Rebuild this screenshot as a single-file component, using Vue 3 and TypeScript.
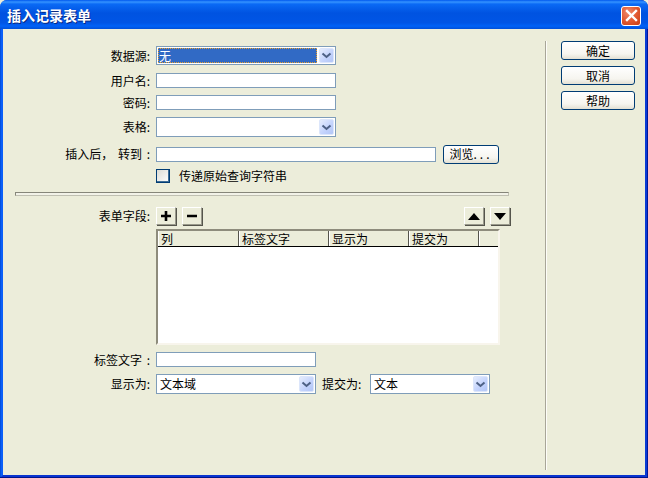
<script setup lang="ts">
const columns: { label: string; width: number; pad: number }[] = [
  { label: '列', width: 81, pad: 2 },
  { label: '标签文字', width: 90, pad: 2 },
  { label: '显示为', width: 80, pad: 2 },
  { label: '提交为', width: 70, pad: 2 },
]
</script>

<template>
  <div class="window">
    <header class="titlebar">
      <span class="title">插入记录表单</span>
      <button class="close" aria-label="关闭">
        <svg width="13" height="13" viewBox="0 0 13 13">
          <path d="M2 2 L11 11 M11 2 L2 11" stroke="#fff" stroke-width="2.4" stroke-linecap="square" fill="none" />
        </svg>
      </button>
    </header>
    <div class="body">
      <main class="form">
        <div class="row r-source">
          <label class="lab">数据源:</label>
          <div class="select w180">
            <span class="value selected">无</span>
            <span class="arrow"><svg width="11" height="7" viewBox="0 0 11 7"><path d="M1.5 1.5 L5.5 5 L9.5 1.5" fill="none" stroke="#4d6185" stroke-width="2" /></svg></span>
          </div>
        </div>
        <div class="row r-user">
          <label class="lab">用户名:</label>
          <div class="input w180"></div>
        </div>
        <div class="row r-pass">
          <label class="lab">密码:</label>
          <div class="input w180"></div>
        </div>
        <div class="row r-table">
          <label class="lab">表格:</label>
          <div class="select w180 tall">
            <span class="value"></span>
            <span class="arrow"><svg width="11" height="7" viewBox="0 0 11 7"><path d="M1.5 1.5 L5.5 5 L9.5 1.5" fill="none" stroke="#4d6185" stroke-width="2" /></svg></span>
          </div>
        </div>
        <div class="row r-goto">
          <label class="lab">插入后， 转到 :</label>
          <div class="input w280"></div>
          <button class="xp browse">浏览<span class="dots">...</span></button>
        </div>
        <div class="row r-check">
          <span class="check"></span>
          <span class="check-label">传递原始查询字符串</span>
        </div>
        <div class="rule"></div>
        <div class="row r-fields">
          <label class="lab">表单字段:</label>
          <button class="tool">
            <svg width="10" height="10" viewBox="0 0 10 10"><path d="M5 0 V10 M0 5 H10" stroke="#000" stroke-width="2.6" fill="none" /></svg>
          </button>
          <button class="tool minus">
            <svg width="10" height="10" viewBox="0 0 10 10"><path d="M0 5 H10" stroke="#000" stroke-width="2.6" fill="none" /></svg>
          </button>
          <span class="spacer"></span>
          <button class="tool">
            <svg width="12" height="7" viewBox="0 0 12 7"><path d="M6 0 L12 7 H0 Z" fill="#000" /></svg>
          </button>
          <button class="tool minus">
            <svg width="12" height="7" viewBox="0 0 12 7"><path d="M0 0 H12 L6 7 Z" fill="#000" /></svg>
          </button>
        </div>
        <div class="row r-list">
          <div class="list">
            <div class="list-head">
              <span
                v-for="c in columns"
                :key="c.label"
                class="col"
                :style="{ width: c.width + 'px', paddingLeft: c.pad + 'px' }"
              >{{ c.label }}</span>
              <span class="col rest"></span>
            </div>
          </div>
        </div>
        <div class="row r-labeltext">
          <label class="lab">标签文字 :</label>
          <div class="input w160"></div>
        </div>
        <div class="row r-display">
          <label class="lab">显示为:</label>
          <div class="select w160 tall">
            <span class="value">文本域</span>
            <span class="arrow"><svg width="11" height="7" viewBox="0 0 11 7"><path d="M1.5 1.5 L5.5 5 L9.5 1.5" fill="none" stroke="#4d6185" stroke-width="2" /></svg></span>
          </div>
          <label class="lab2">提交为:</label>
          <div class="select w120 tall">
            <span class="value">文本</span>
            <span class="arrow"><svg width="11" height="7" viewBox="0 0 11 7"><path d="M1.5 1.5 L5.5 5 L9.5 1.5" fill="none" stroke="#4d6185" stroke-width="2" /></svg></span>
          </div>
        </div>
      </main>
      <div class="vline"></div>
      <aside class="actions">
        <button class="xp">确定</button>
        <button class="xp">取消</button>
        <button class="xp">帮助</button>
      </aside>
    </div>
  </div>
</template>

<style>
html, body { margin: 0; padding: 0; background: #ecedda; }
</style>

<style scoped>
.window {
  width: 648px;
  height: 478px;
  box-sizing: border-box;
  display: flex;
  flex-direction: column;
  font-family: "Noto Sans CJK SC", "Liberation Sans", sans-serif;
  font-size: 12px;
  line-height: 14px;
  color: #000;
  background: linear-gradient(90deg, #0450de 50%, #00169c 50%);
  border-bottom: 1px solid #00138c;
  border-radius: 7px 7px 0 0;
  overflow: hidden;
}
.titlebar {
  height: 29px;
  flex: none;
  display: flex;
  align-items: center;
  justify-content: space-between;
  padding: 0 7px 0 7px;
  box-sizing: border-box;
  background: linear-gradient(180deg, #0058ee 0%, #3593ff 7%, #0a6af5 14%, #0053e1 45%, #0055e5 78%, #0062f7 90%, #0050d8 100%);
}
.title {
  font-size: 14px;
  font-weight: 700;
  color: #fff;
  text-shadow: 1px 1px 0 #0a2a80;
}
.close {
  width: 20px;
  height: 20px;
  margin-top: 2px;
  padding: 0;
  border: 1px solid #fff;
  border-radius: 3px;
  background: radial-gradient(circle at 35% 30%, #ef8a6c 0%, #e25a32 50%, #c73c14 100%);
  display: flex;
  align-items: center;
  justify-content: center;
}
.body {
  flex: 1;
  margin: 0 1px;
  border-left: 2px solid #0a5ff8;
  border-right: 2px solid #0a3cd4;
  border-bottom: 2px solid #0a35d0;
  background: #ecedda;
  display: flex;
  min-height: 0;
}
.form {
  width: 542px;
  flex: none;
  display: flex;
  flex-direction: column;
  padding-left: 12px;
  box-sizing: border-box;
}
.row {
  display: flex;
  align-items: center;
  flex: none;
}
.lab {
  width: 135px;
  flex: none;
  text-align: right;
  padding-right: 6px;
  word-spacing: 2px;
  white-space: nowrap;
}
.lab2 {
  width: 44px;
  margin-left: 6px;
  margin-right: 4px;
  white-space: nowrap;
}
.r-source { margin-top: 17px; }
.r-user { margin-top: 8px; }
.r-pass { margin-top: 7px; }
.r-table { margin-top: 7px; }
.r-goto { margin-top: 8px; height: 18px; }
.r-check { margin-top: 6px; padding-left: 141px; }
.r-fields { margin-top: 11px; height: 18px; }
.r-list { margin-top: 4px; padding-left: 141px; }
.r-labeltext { margin-top: 7px; }
.r-display { margin-top: 7px; }
.input, .select {
  box-sizing: border-box;
  background: #fff;
  border: 1px solid #7f9db9;
  flex: none;
}
.input { height: 15px; }
.w180 { width: 180px; }
.w280 { width: 280px; }
.w160 { width: 160px; }
.w120 { width: 120px; }
.select {
  height: 19px;
  display: flex;
  align-items: center;
  padding: 1px;
}
.select.tall { height: 20px; }
.value {
  flex: 1;
  height: 100%;
  padding-left: 2px;
  line-height: 15px;
  box-sizing: border-box;
  white-space: nowrap;
}
.selected {
  background: #316ac5;
  color: #fff;
  outline: 1px dotted #e8a030;
  outline-offset: -1px;
  margin-right: 2px;
  padding-left: 1px;
}
.arrow {
  width: 15px;
  height: 100%;
  flex: none;
  border-radius: 2px;
  background: linear-gradient(135deg, #e6edfd 0%, #c2d2fc 60%, #b2c6f6 100%);
  border: 1px solid #dce6fb;
  box-sizing: border-box;
  display: flex;
  align-items: center;
  justify-content: center;
}
.xp {
  box-sizing: border-box;
  height: 19px;
  padding: 0;
  border: 1px solid #003c74;
  border-radius: 3px;
  background: linear-gradient(180deg, #ffffff 0%, #f6f5ef 70%, #e3e0d3 100%);
  font: inherit;
  color: #000;
  display: flex;
  align-items: center;
  justify-content: center;
}
.browse {
  width: 56px;
  margin-left: 7px;
}
.dots { letter-spacing: 3px; }
.check {
  width: 14px;
  height: 14px;
  box-sizing: border-box;
  border: 1px solid #003c74;
  box-shadow: inset -1px -1px 0 #3f6d96;
  background: linear-gradient(135deg, #dcdcd5 0%, #ffffff 100%);
  flex: none;
}
.check-label { margin-left: 9px; }
.rule {
  width: 494px;
  height: 4px;
  margin-top: 9px;
  box-sizing: border-box;
  border: 1px solid;
  border-color: #86867a #c0c0b2 #c0c0b2 #86867a;
  background: #f2f2e8;
  flex: none;
}
.tool {
  width: 20px;
  height: 18px;
  padding: 0;
  box-sizing: border-box;
  border: 1px solid;
  border-color: #fff #9a9a8c #9a9a8c #fff;
  box-shadow: 1px 1px 0 #55554c;
  background: #ecedda;
  display: flex;
  align-items: center;
  justify-content: center;
  flex: none;
}
.minus { margin-left: 6px; }
.spacer { width: 262px; flex: none; }
.list {
  width: 344px;
  height: 116px;
  box-sizing: border-box;
  background: #fff;
  border: 2px solid;
  border-color: #8e8c7c #f8f5ec #f8f5ec #8e8c7c;
}
.list-head {
  height: 15px;
  display: flex;
  background: #ecedda;
  border-bottom: 1px solid #000;
}
.col {
  box-sizing: border-box;
  height: 15px;
  line-height: 15px;
  flex: none;
  border-right: 1px solid #55544c;
  border-left: 1px solid #fff;
  white-space: nowrap;
}
.rest { flex: 1; border-right: none; }
.vline {
  width: 2px;
  height: 429px;
  margin-top: 12px;
  flex: none;
  background: #a8a698;
  border-right: 1px solid #fdfdf8;
  box-sizing: border-box;
}
.actions {
  margin-left: 14px;
  padding-top: 12px;
  width: 74px;
  display: flex;
  flex-direction: column;
  gap: 6px;
}
</style>
